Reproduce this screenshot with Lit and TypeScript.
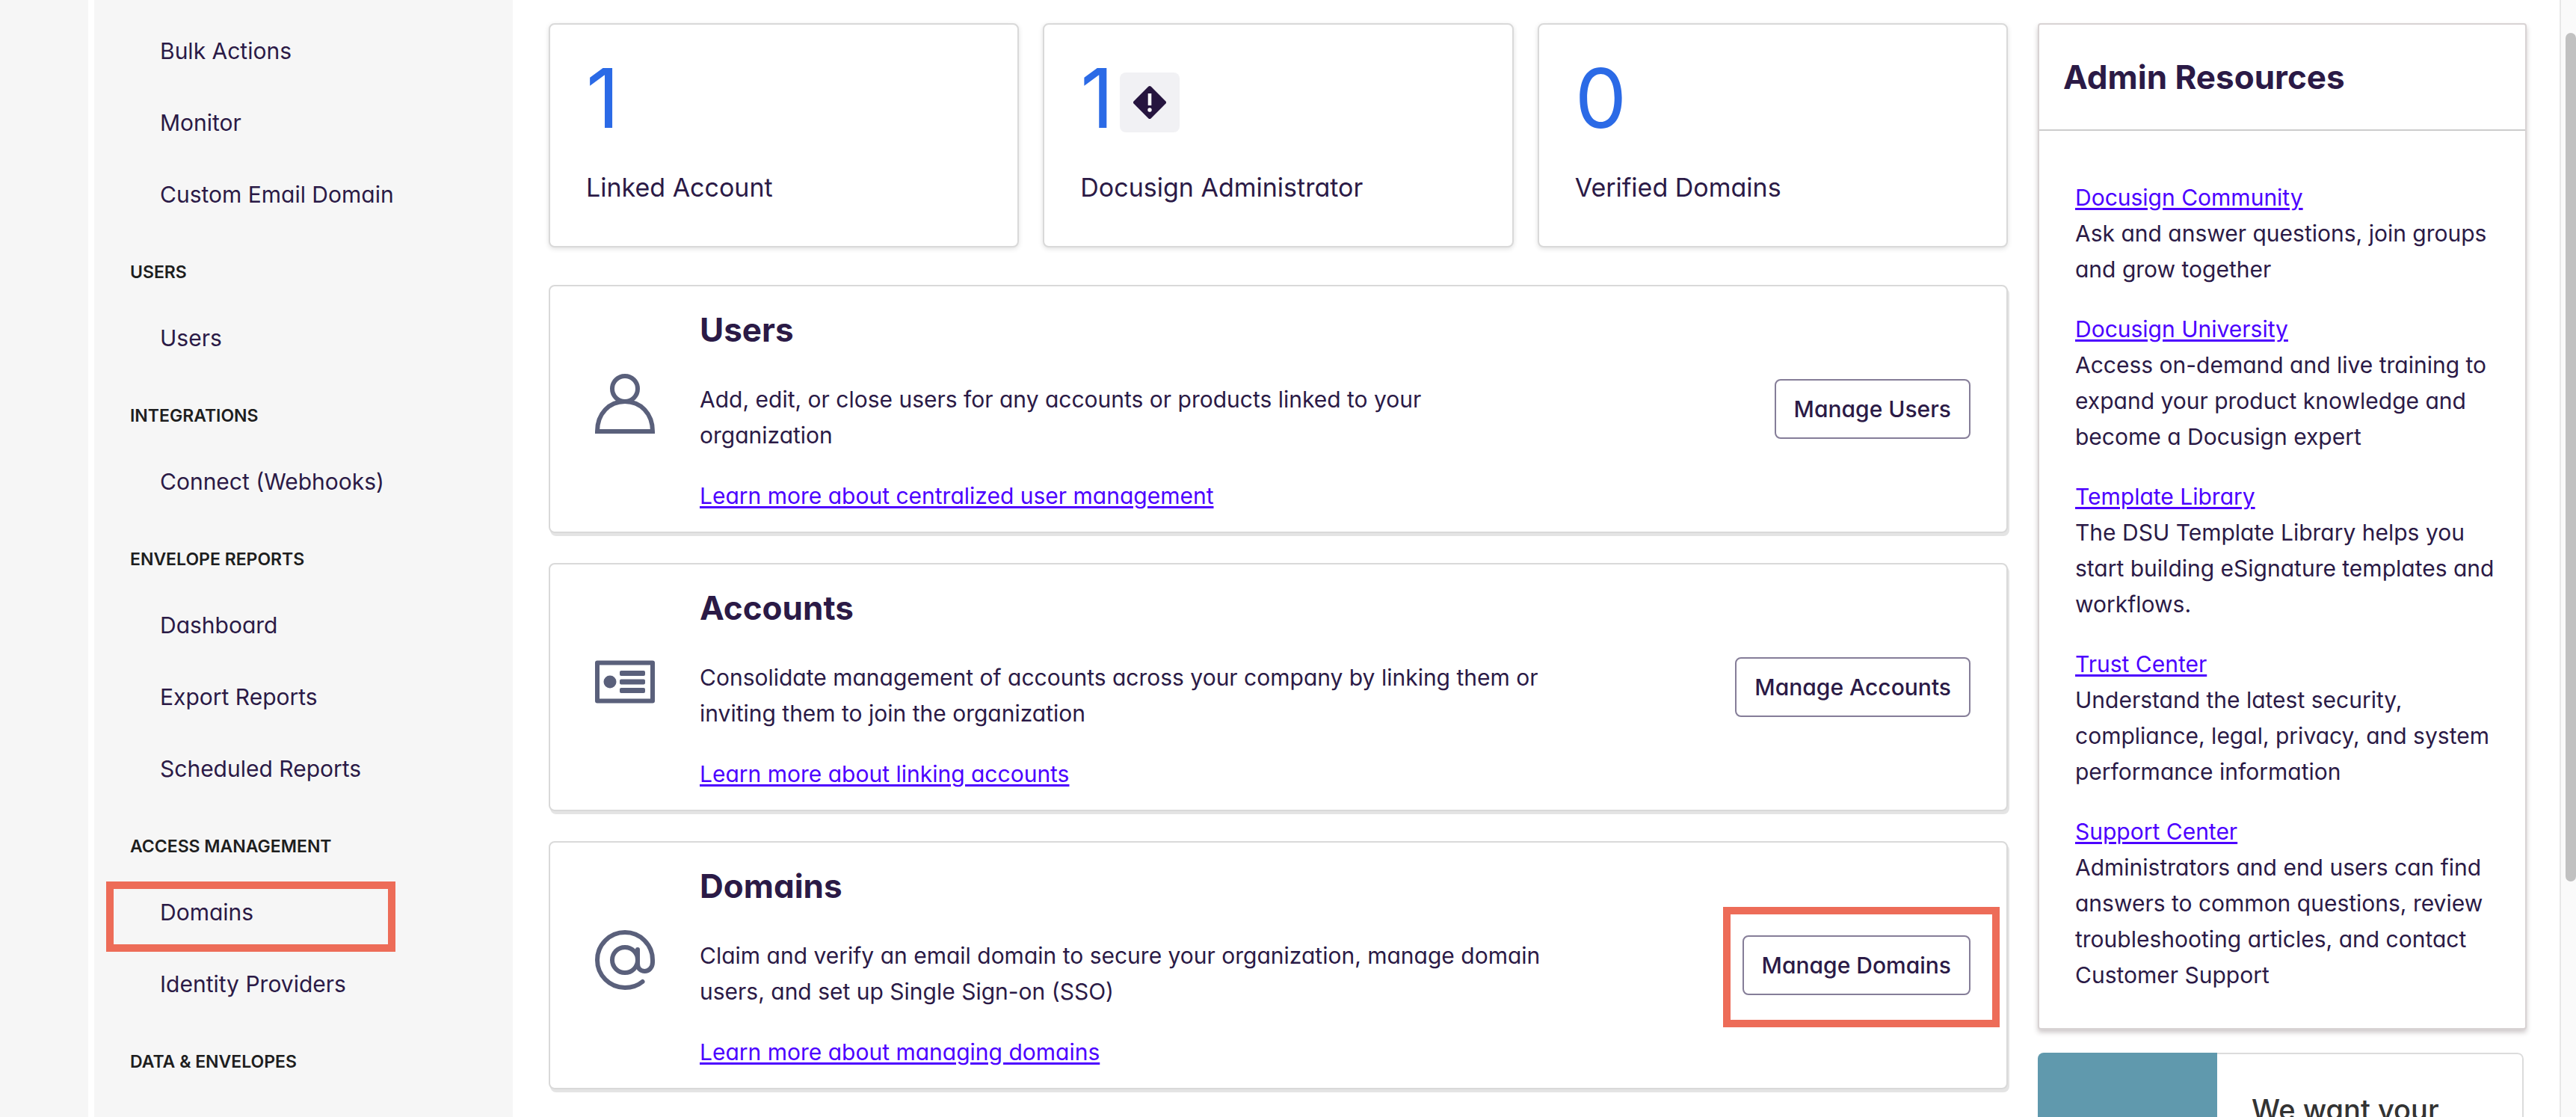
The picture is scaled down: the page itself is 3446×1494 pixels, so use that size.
import { LitElement, html, css, svg, nothing, TemplateResult } from "lit";
import { customElement, property } from "lit/decorators.js";
import { classMap } from "lit/directives/class-map.js";

interface NavItem {
  label: string;
  marked?: boolean;
}

interface NavGroup {
  title?: string;
  items: NavItem[];
}

interface Feature {
  icon: string;
  title: string;
  text: string;
  link: string;
  action: string;
  marked?: boolean;
}

const NAV: NavGroup[] = [
  { items: [{ label: "Bulk Actions" }, { label: "Monitor" }, { label: "Custom Email Domain" }] },
  { title: "USERS", items: [{ label: "Users" }] },
  { title: "INTEGRATIONS", items: [{ label: "Connect (Webhooks)" }] },
  {
    title: "ENVELOPE REPORTS",
    items: [{ label: "Dashboard" }, { label: "Export Reports" }, { label: "Scheduled Reports" }],
  },
  {
    title: "ACCESS MANAGEMENT",
    items: [{ label: "Domains", marked: true }, { label: "Identity Providers" }],
  },
  { title: "DATA & ENVELOPES", items: [] },
];

const STATS = [
  { value: 1, label: "Linked Account", warn: false },
  { value: 1, label: "Docusign Administrator", warn: true },
  { value: 0, label: "Verified Domains", warn: false },
];

const FEATURES: Feature[] = [
  {
    icon: "user",
    title: "Users",
    text: "Add, edit, or close users for any accounts or products linked to your organization",
    link: "Learn more about centralized user management",
    action: "Manage Users",
  },
  {
    icon: "card",
    title: "Accounts",
    text: "Consolidate management of accounts across your company by linking them or inviting them to join the organization",
    link: "Learn more about linking accounts",
    action: "Manage Accounts",
  },
  {
    icon: "at",
    title: "Domains",
    text: "Claim and verify an email domain to secure your organization, manage domain users, and set up Single Sign-on (SSO)",
    link: "Learn more about managing domains",
    action: "Manage Domains",
    marked: true,
  },
];

const RESOURCES = [
  { title: "Docusign Community", text: "Ask and answer questions, join groups and grow together" },
  {
    title: "Docusign University",
    text: "Access on-demand and live training to expand your product knowledge and become a Docusign expert",
  },
  {
    title: "Template Library",
    text: "The DSU Template Library helps you start building eSignature templates and workflows.",
  },
  {
    title: "Trust Center",
    text: "Understand the latest security, compliance, legal, privacy, and system performance information",
  },
  {
    title: "Support Center",
    text: "Administrators and end users can find answers to common questions, review troubleshooting articles, and contact Customer Support",
  },
];

const ICONS: Record<string, TemplateResult> = {
  user: svg`
    <circle cx="40" cy="20" r="17"></circle>
    <path d="M3 77C3 53 19 37 40 37S77 53 77 77Z"></path>`,
  card: svg`
    <rect x="3" y="14.5" width="74" height="51" stroke-linejoin="round"></rect>
    <g fill="currentColor" stroke="none">
      <circle cx="20" cy="40" r="8.5"></circle>
      <rect x="33" y="25" width="34" height="7" rx="2"></rect>
      <rect x="33" y="36.5" width="34" height="7" rx="2"></rect>
      <rect x="33" y="48" width="34" height="7" rx="2"></rect>
    </g>`,
  at: svg`
    <circle cx="40" cy="40" r="17"></circle>
    <path stroke-linecap="round"
      d="M57 26V45C57 51.500 61 55 66.500 55S77 50 77 43V40A37 37 0 1 0 40 77C49 77 57 74.500 63.500 69"></path>`,
};

const base = css`
  * {
    box-sizing: border-box;
  }
  a {
    color: #4c00ff;
    text-decoration: underline;
    text-decoration-thickness: 3px;
    text-underline-offset: 3px;
  }
  h2,
  h3,
  p,
  ul {
    margin: 0;
    padding: 0;
  }
  ul {
    list-style: none;
  }
`;

@customElement("side-nav")
export class SideNav extends LitElement {
  static styles = [
    base,
    css`
      :host {
        display: block;
        background: #f6f6f6;
        padding-top: 20px;
      }
      .title {
        height: 96px;
        padding: 16px 0 0 48px;
        line-height: 80px;
        font-size: 23px;
        font-weight: 600;
        color: #1e1e1e;
      }
      .item {
        position: relative;
        padding-left: 88px;
        line-height: 96px;
      }
      .link {
        color: inherit;
        text-decoration: none;
      }
      .mark {
        position: absolute;
        inset: 7px auto -5px 16px;
        width: 387px;
        border: 10px solid #ed6c58;
        pointer-events: none;
      }
    `,
  ];

  render() {
    return html`<nav>
      ${NAV.map(
        (g) => html`
          ${g.title ? html`<h3 class="title">${g.title}</h3>` : nothing}
          <ul>
            ${g.items.map(
              (i) => html`<li class="item">
                <a class="link" href="#">${i.label}</a>
                ${i.marked ? html`<span class="mark"></span>` : nothing}
              </li>`
            )}
          </ul>
        `
      )}
    </nav>`;
  }
}

@customElement("stat-card")
export class StatCard extends LitElement {
  @property({ type: Number }) value = 0;
  @property() label = "";
  @property({ type: Boolean }) warn = false;

  static styles = [
    base,
    css`
      :host {
        display: block;
        padding: 32px 48px 48px;
        background: #fff;
        border: 2px solid #d9d9d9;
        border-radius: 8px;
        box-shadow: 0 2px 6px rgba(0, 0, 0, 0.12);
      }
      .top {
        display: flex;
        align-items: center;
        gap: 8px;
        height: 132px;
      }
      .value {
        font-size: 110px;
        line-height: 132px;
        color: #2b6ae6;
      }
      .badge {
        width: 80px;
        height: 80px;
        margin-top: 12px;
        border-radius: 8px;
        background: #f1f1f4;
      }
      .label {
        margin-top: 24px;
        font-size: 34px;
        line-height: 60px;
      }
    `,
  ];

  render() {
    return html`
      <div class="top">
        <span class="value">${this.value}</span>
        ${this.warn
          ? html`<svg class="badge" viewBox="0 0 80 80" role="img" aria-label="Warning">
              <path
                d="M38.200 18.800a2.600 2.600 0 0 1 3.600 0L61.200 38.200a2.600 2.600 0 0 1 0 3.600L41.800 61.200a2.600 2.600 0 0 1-3.600 0L18.800 41.800a2.600 2.600 0 0 1 0-3.600Z"
                fill="#26153f"
              ></path>
              <rect x="37.700" y="28" width="4.600" height="16" fill="#fff"></rect>
              <circle cx="40" cy="50" r="2.700" fill="#fff"></circle>
            </svg>`
          : nothing}
      </div>
      <p class="label">${this.label}</p>
    `;
  }
}

@customElement("feature-panel")
export class FeaturePanel extends LitElement {
  @property({ attribute: false }) feature!: Feature;

  static styles = [
    base,
    css`
      :host {
        display: flex;
        align-items: center;
        padding: 28px 48px 24px 60px;
        background: #fff;
        border: 2px solid #d9d9d9;
        border-radius: 8px;
        box-shadow: 2px 4px 0 #e4e4e4;
      }
      .icon {
        flex: none;
        width: 80px;
        height: 80px;
        margin: 0 60px 18px 0;
        color: #5a607b;
      }
      .title {
        font-size: 44px;
        line-height: 60px;
        font-weight: 700;
      }
      .body {
        flex: 0 1 1140px;
      }
      .text {
        margin: 39px 0 33px;
      }
      .action {
        position: relative;
        flex: none;
        margin: 0 0 4px auto;
      }
      .button {
        display: block;
        height: 80px;
        padding: 0 24px;
        border: 2px solid #857d98;
        border-radius: 8px;
        background: #fff;
        color: inherit;
        font: inherit;
        font-feature-settings: inherit;
        font-weight: 500;
      }
      .marked::after {
        content: "";
        position: absolute;
        inset: -38px -39px -43px -26px;
        border: 10px solid #ed6c58;
        pointer-events: none;
      }
    `,
  ];

  render() {
    const f = this.feature;
    return html`
      <svg class="icon" viewBox="0 0 80 80" fill="none" stroke="currentColor" stroke-width="6" aria-hidden="true">
        ${ICONS[f.icon]}
      </svg>
      <div class="body">
        <h2 class="title">${f.title}</h2>
        <p class="text">${f.text}</p>
        <a href="#">${f.link}</a>
      </div>
      <div class=${classMap({ action: true, marked: !!f.marked })}>
        <button class="button" type="button">${f.action}</button>
      </div>
    `;
  }
}

@customElement("resource-list")
export class ResourceList extends LitElement {
  static styles = [
    base,
    css`
      :host {
        display: block;
        background: #fff;
        border: 2px solid #d8d3d4;
        border-radius: 4px;
        box-shadow: 0 4px 6px rgba(60, 40, 45, 0.25);
      }
      .title {
        padding: 40px 32px;
        border-bottom: 2px solid #ccc;
        font-size: 44px;
        line-height: 60px;
        font-weight: 700;
      }
      .list {
        display: grid;
        gap: 32px;
        padding: 65px 32px 47px 48px;
      }
    `,
  ];

  render() {
    return html`
      <h2 class="title">Admin Resources</h2>
      <ul class="list">
        ${RESOURCES.map(
          (r) => html`<li>
            <a href="#">${r.title}</a>
            <p>${r.text}</p>
          </li>`
        )}
      </ul>
    `;
  }
}

@customElement("app-root")
export class AppRoot extends LitElement {
  static styles = [
    base,
    css`
      :host {
        display: block;
        height: 100vh;
        overflow: hidden;
        background: #fff;
        color: #2b1a46;
        font-family: Inter, "Liberation Sans", sans-serif;
        font-feature-settings: "cv11";
        font-size: 30px;
        line-height: 48px;
      }
      .page {
        display: grid;
        grid-template-columns: 118px 560px minmax(0, 1fr) 22px;
        height: 100%;
      }
      .rail {
        background: #f6f6f6;
      }
      .nav {
        margin-left: 8px;
        margin-right: -8px;
        overflow: hidden;
      }
      .content {
        display: grid;
        grid-template-columns: minmax(0, 1fr) 654px;
        align-items: start;
        gap: 40px;
        padding: 31px 44px 0 56px;
        overflow: hidden;
      }
      .main {
        display: grid;
        gap: 40px;
      }
      .stats {
        display: grid;
        grid-template-columns: repeat(3, minmax(0, 1fr));
        gap: 32px;
        margin-bottom: 10px;
      }
      .aside {
        display: grid;
        gap: 31px;
      }
      .feedback {
        display: grid;
        grid-template-columns: 240px 1fr;
        margin-right: 4px;
        min-height: 300px;
        border-radius: 8px;
        overflow: hidden;
      }
      .art {
        background: #6099ad;
      }
      .ask {
        padding: 46px;
        border: 2px solid #dcdcdc;
        border-left: 0;
        border-radius: 0 8px 8px 0;
        font-size: 38px;
        line-height: 56px;
        font-weight: 500;
        color: #333;
      }
      .scroll {
        padding: 44px 0 0 6px;
        border-left: 2px solid #e8e8e8;
        background: #fafafa;
      }
      .thumb {
        height: 76vh;
        border-radius: 8px;
        background: #c1c1c1;
      }
    `,
  ];

  render() {
    return html`
      <div class="page">
        <div class="rail"></div>
        <side-nav class="nav"></side-nav>
        <div class="content">
          <main class="main">
            <div class="stats">
              ${STATS.map(
                (s) => html`<stat-card .value=${s.value} .label=${s.label} .warn=${s.warn}></stat-card>`
              )}
            </div>
            ${FEATURES.map((f) => html`<feature-panel .feature=${f}></feature-panel>`)}
          </main>
          <aside class="aside">
            <resource-list></resource-list>
            <section class="feedback">
              <div class="art"></div>
              <p class="ask">We want your</p>
            </section>
          </aside>
        </div>
        <div class="scroll"><div class="thumb"></div></div>
      </div>
    `;
  }
}
